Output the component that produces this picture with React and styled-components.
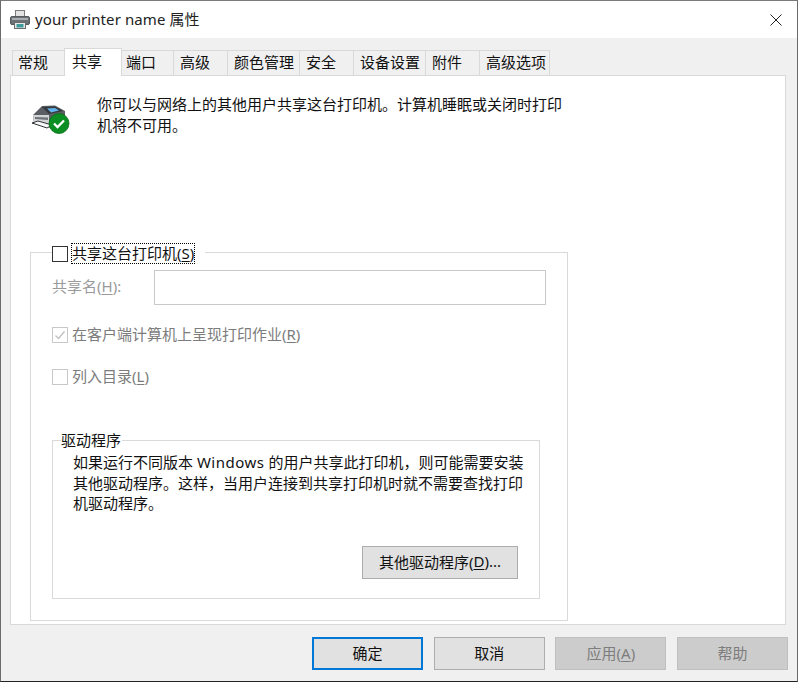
import styled, { createGlobalStyle } from "styled-components"

const GlobalStyle = createGlobalStyle`
  html, body {
    margin: 0;
    padding: 0;
    background: #f0f0f0;
  }
  * {
    box-sizing: border-box;
  }
`;

const Window = styled.div`
  width: 798px;
  height: 682px;
  display: flex;
  flex-direction: column;
  background: #f0f0f0;
  border: 1px solid #6b6b6b;
  border-top-color: #7a7a7a;
  border-bottom-color: #222;
  font-family: "Noto Sans", "Noto Sans CJK SC", sans-serif;
  font-size: 15px;
  color: #111;
  overflow: hidden;
`;

const TitleBar = styled.div`
  height: 37px;
  flex: none;
  background: #fff;
  display: flex;
  align-items: center;
  padding-left: 9px;
`;

const TitleText = styled.div`
  margin-left: 5px;
  padding-bottom: 2px;
  letter-spacing: 0.1px;
  flex: 1;
  color: #222;
`;

const CloseButton = styled.div`
  width: 42px;
  height: 37px;
  display: flex;
  align-items: center;
  justify-content: center;
`;

const TabStrip = styled.div`
  height: 37px;
  flex: none;
  display: flex;
  align-items: flex-end;
  padding-left: 11px;
`;

const Tab = styled.div`
  width: ${(p) => p.$w}px;
  height: 25px;
  background: #f0f0f0;
  border-top: 1px solid #d9d9d9;
  border-right: 1px solid #d9d9d9;
  border-left: ${(p) => (p.$first ? "1px solid #d9d9d9" : "none")};
  padding-left: ${(p) => (p.$first ? 5 : 6)}px;
  line-height: 23px;
  white-space: nowrap;
`;

const ActiveTab = styled.div`
  width: 58px;
  height: 28px;
  margin: 0 -2px;
  background: #fff;
  border: 1px solid #d9d9d9;
  border-bottom: none;
  padding-left: 7px;
  line-height: 24px;
  white-space: nowrap;
  position: relative;
  top: 1px;
  z-index: 2;
`;

const Page = styled.div`
  width: 776px;
  height: 550px;
  margin-left: 9px;
  flex: none;
  background: #fff;
  border: 1px solid #d9d9d9;
  padding: 18px 0 0 19px;
`;

const Intro = styled.div`
  display: flex;
  height: 158px;
`;

const IconSlot = styled.div`
  width: 67px;
  flex: none;
  padding: 11px 0 0 1px;
`;

const IntroText = styled.div`
  width: 470px;
  line-height: 21px;
`;

const Group = styled.div`
  width: 538px;
  height: 369px;
  border: 1px solid #d9d9d9;
  padding: 0 21px;
  position: relative;
`;

const GroupLegend = styled.div`
  position: absolute;
  top: -10px;
  left: 21px;
  height: 21px;
  background: #fff;
  padding-right: 10px;
  display: flex;
  align-items: center;
`;

const Box = styled.div`
  width: 16px;
  height: 16px;
  flex: none;
  background: #fff;
  border: 1px solid ${(p) => (p.$disabled ? "#c8c8c8" : "#333")};
  display: flex;
  align-items: center;
  justify-content: center;
`;

const FocusLabel = styled.span`
  margin-left: 3px;
  height: 21px;
  border: 1px dotted #000;
  line-height: 19px;
  white-space: nowrap;
`;

const Key = styled.span`
  text-decoration: underline;
  text-underline-offset: 2px;
`;

const NameRow = styled.div`
  display: flex;
  align-items: center;
  margin-top: 17px;
  color: #9a9a9a;
`;

const NameLabel = styled.div`
  width: 102px;
  padding-bottom: 4px;
`;

const NameInput = styled.div`
  width: 392px;
  height: 35px;
  border: 1px solid #c8c8c8;
  background: #fff;
`;

const CheckRow = styled.div`
  display: flex;
  align-items: center;
  margin-top: ${(p) => p.$top}px;
  color: #7c7c7c;
  height: 20px;
`;

const CheckLabel = styled.span`
  margin-left: 4px;
  padding-bottom: 3px;
`;

const DriverGroup = styled.div`
  width: 488px;
  height: 159px;
  margin-top: 53px;
  border: 1px solid #d9d9d9;
  padding: 11px 0 0 20px;
  position: relative;
`;

const DriverLegend = styled.div`
  position: absolute;
  top: -11px;
  left: 8px;
  background: #fff;
  padding-right: 1px;
  line-height: 20px;
`;

const DriverText = styled.div`
  line-height: 20.5px;
  white-space: nowrap;
`;

const Latin = styled.span`
  letter-spacing: 0.5px;
`;

const DriverAction = styled.div`
  display: flex;
  justify-content: flex-end;
  margin-top: 32px;
  padding-right: 21px;
`;

const Button = styled.div`
  width: ${(p) => p.$w}px;
  height: 33px;
  flex: none;
  display: flex;
  align-items: center;
  justify-content: center;
  padding-bottom: 2px;
  white-space: nowrap;
  background: ${(p) => (p.$disabled ? "#cccccc" : "#e1e1e1")};
  border: ${(p) => (p.$primary ? "2px solid #0078d7" : `1px solid ${p.$disabled ? "#bfbfbf" : "#adadad"}`)};
  color: ${(p) => (p.$disabled ? "#7d7d7d" : "#111")};
`;

const Footer = styled.div`
  flex: 1;
  display: flex;
  justify-content: flex-end;
  gap: 10.67px;
  padding: 12px 9px 0 0;
`;

const SmallPrinter = () => (
  <svg width="20" height="20" viewBox="0 0 20 20">
    <rect x="5.5" y="0.5" width="9" height="7" fill="#e2e2e2" stroke="#7a7a7a" />
    <rect x="0.5" y="6.5" width="19" height="8" rx="1.5" fill="#6c7176" stroke="#565a5e" />
    <rect x="2" y="8" width="16" height="2" fill="#a9adb1" />
    <rect x="4.5" y="12.5" width="11" height="6" fill="#e8e8e8" stroke="#6b6b6b" />
    <rect x="6.5" y="14" width="7" height="3.5" fill="#3f9a9c" />
  </svg>
);

const SharePrinter = () => (
  <svg width="40" height="32" viewBox="0 0 40 32">
    <path d="M2 10 L11 1 L24 0.5 L34 6 L34 15 L20 23 L3 18 Z" fill="#5b5e62" />
    <path d="M11 2 L24 1.5 L32 6 L18 9 Z" fill="#34373b" />
    <path d="M16 3.5 L24 3 L28 5.5 L20 7.5 Z" fill="#63b4ea" />
    <path d="M2 10 L18 10 L18 21 L3 17 Z" fill="#d2d4d6" />
    <path d="M4 12 L17 12.5 L17 15 L4 14 Z" fill="#6f7276" />
    <path d="M1 18 L7 16 L21 20 L16 23 Z" fill="#f8f8f8" stroke="#2f3236" strokeWidth="1" />
    <circle cx="28" cy="18.5" r="10" fill="#0c8f22" stroke="#0b6d1a" strokeWidth="0.8" />
    <path d="M23 18.5 L26.5 22 L33 15.5" fill="none" stroke="#fff" strokeWidth="2.3" />
  </svg>
);

const App = () => {
  return (
    <Window>
      <GlobalStyle />
      <TitleBar>
        <SmallPrinter />
        <TitleText>your printer name 属性</TitleText>
        <CloseButton>
          <svg width="12" height="12" viewBox="0 0 12 12">
            <path d="M0.5 0.5 L11.5 11.5 M11.5 0.5 L0.5 11.5" stroke="#222" strokeWidth="1" fill="none" />
          </svg>
        </CloseButton>
      </TitleBar>
      <TabStrip>
        <Tab $w={54} $first>常规</Tab>
        <ActiveTab>共享</ActiveTab>
        <Tab $w={54}>端口</Tab>
        <Tab $w={54}>高级</Tab>
        <Tab $w={72}>颜色管理</Tab>
        <Tab $w={54}>安全</Tab>
        <Tab $w={72}>设备设置</Tab>
        <Tab $w={54}>附件</Tab>
        <Tab $w={70}>高级选项</Tab>
      </TabStrip>
      <Page>
        <Intro>
          <IconSlot><SharePrinter /></IconSlot>
          <IntroText>你可以与网络上的其他用户共享这台打印机。计算机睡眠或关闭时打印机将不可用。</IntroText>
        </Intro>
        <Group>
          <GroupLegend>
            <Box />
            <FocusLabel>共享这台打印机(<Key>S</Key>)</FocusLabel>
          </GroupLegend>
          <NameRow>
            <NameLabel>共享名(<Key>H</Key>):</NameLabel>
            <NameInput />
          </NameRow>
          <CheckRow $top={20}>
            <Box $disabled>
              <svg width="12" height="12" viewBox="0 0 12 12">
                <path d="M1.5 6.5 L4.5 9.5 L10.5 2.5" fill="none" stroke="#c0c0c0" strokeWidth="1.4" />
              </svg>
            </Box>
            <CheckLabel>在客户端计算机上呈现打印作业(<Key>R</Key>)</CheckLabel>
          </CheckRow>
          <CheckRow $top={22}>
            <Box $disabled />
            <CheckLabel>列入目录(<Key>L</Key>)</CheckLabel>
          </CheckRow>
          <DriverGroup>
            <DriverLegend>驱动程序</DriverLegend>
            <DriverText>
              如果运行不同版本 <Latin>Windows</Latin> 的用户共享此打印机，则可能需要安装<br />
              其他驱动程序。这样，当用户连接到共享打印机时就不需要查找打印<br />
              机驱动程序。
            </DriverText>
            <DriverAction>
              <Button $w={156}>其他驱动程序(<Key>D</Key>)...</Button>
            </DriverAction>
          </DriverGroup>
        </Group>
      </Page>
      <Footer>
        <Button $w={111} $primary>确定</Button>
        <Button $w={111}>取消</Button>
        <Button $w={111} $disabled>应用(<Key>A</Key>)</Button>
        <Button $w={111} $disabled>帮助</Button>
      </Footer>
    </Window>
  )
}

export default App;
